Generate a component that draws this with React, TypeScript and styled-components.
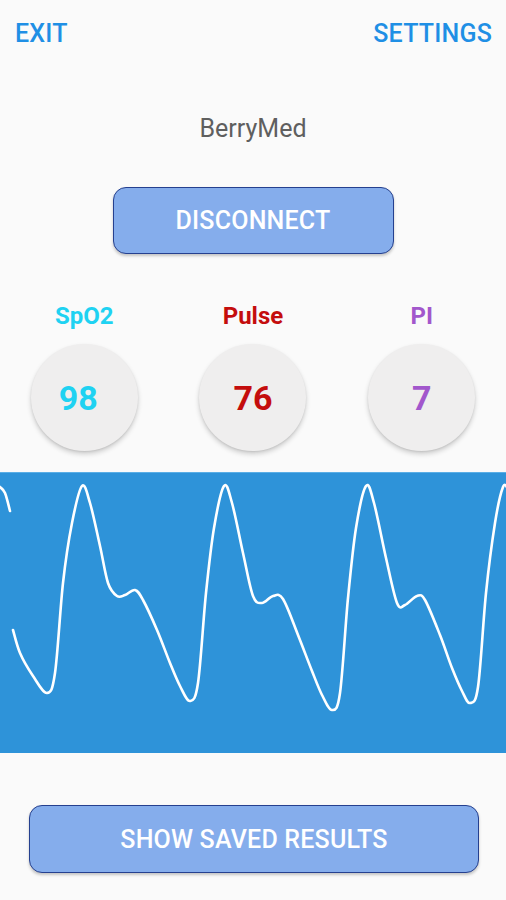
import styled, { createGlobalStyle } from "styled-components";

const GlobalStyle = createGlobalStyle`
    html, body {
        margin: 0;
        padding: 0;
        background: #fafafa;
    }
    body {
        font-family: Roboto, "Noto Sans", sans-serif;
    }
`

const Page = styled.div`
    width: 506px;
    height: 900px;
    overflow: hidden;
    display: flex;
    flex-direction: column;
    background: #fafafa;
`

const TopBar = styled.div`
    display: flex;
    justify-content: space-between;
    padding: 22px 14px 0 15px;
`

const TopLink = styled.span`
    color: #1f8fe5;
    font-size: 25px;
    line-height: 24px;
    font-weight: 500;
    letter-spacing: 0.2px;
`

const DeviceName = styled.div`
    margin-top: 71px;
    text-align: center;
    color: #5f5f5f;
    font-size: 25px;
    line-height: 24px;
`

const ActionButton = styled.button<{ w: number; h: number; top: number; left?: number }>`
    display: flex;
    align-items: center;
    justify-content: center;
    box-sizing: border-box;
    width: ${p => p.w}px;
    height: ${p => p.h}px;
    margin: ${p => p.top}px 0 0 ${p => (p.left === undefined ? "auto" : `${p.left}px`)};
    ${p => (p.left === undefined ? "margin-right: auto;" : "")}
    padding: 0;
    background: #85adec;
    border: 1.5px solid #25408f;
    border-radius: 13px;
    box-shadow: 0 2px 3px rgba(0, 0, 0, 0.22);
    color: #ffffff;
    font-family: Roboto, sans-serif;
    font-size: 25px;
    font-weight: 500;
    letter-spacing: 0.2px;
`

const Readings = styled.div`
    display: grid;
    grid-template-columns: repeat(3, 1fr);
    margin-top: 51px;
`

const Reading = styled.div`
    display: flex;
    flex-direction: column;
    align-items: center;
`

const ReadingLabel = styled.div<{ color: string }>`
    color: ${p => p.color};
    font-size: 24px;
    line-height: 23px;
    font-weight: 700;
`

const ReadingCircle = styled.div<{ color: string; nudge: number }>`
    margin-top: 16px;
    width: 107px;
    height: 107px;
    box-sizing: border-box;
    padding-right: ${p => p.nudge}px;
    border-radius: 50%;
    background: #efeeee;
    box-shadow: 0 3px 5px rgba(0, 0, 0, 0.18), 0 1px 2px rgba(0, 0, 0, 0.08);
    display: flex;
    align-items: center;
    justify-content: center;
    color: ${p => p.color};
    font-size: 34px;
    font-weight: 700;
`

const WavePanel = styled.div`
    margin-top: 21px;
    height: 281px;
    background: #2e93d9;
    border-top: 1px solid #5aaee6;
    box-sizing: border-box;
`

const WaveSvg = styled.svg`
    display: block;
    width: 506px;
    height: 280px;
`

// pleth samples, page coords (y is shifted by the panel top below)
const PANEL_TOP = 471

const tail = [[0, 484], [5, 490], [10, 508]]

const wave = [
    [13, 627], [20, 650], [33, 673], [47, 690],
    [55, 670], [63, 580], [72, 520], [82, 483], [90, 500], [100, 543], [108, 580], [117, 593], [125, 592], [135, 587], [143, 597], [157, 627], [170, 660], [180, 683], [190, 698],
    [198, 680], [206, 590], [214, 525], [224, 483], [232, 500], [243, 550], [253, 593], [262, 600], [273, 593], [283, 596], [298, 632], [312, 668], [322, 692], [332, 707],
    [340, 690], [348, 595], [356, 525], [366, 483], [374, 500], [386, 555], [397, 600], [405, 602], [417, 593], [425, 597], [440, 632], [452, 665], [462, 688], [470, 700],
    [478, 684], [486, 590], [495, 520], [503, 484], [508, 486],
]

function smoothPath(pts: number[][]): string {
    const p = pts.map(([x, y]) => [x, y - PANEL_TOP])
    let d = `M${p[0][0]},${p[0][1]}`
    for (let i = 0; i < p.length - 1; i++) {
        const p0 = p[i - 1] || p[i]
        const p1 = p[i]
        const p2 = p[i + 1]
        const p3 = p[i + 2] || p2
        const c1x = p1[0] + (p2[0] - p0[0]) / 6
        const c1y = p1[1] + (p2[1] - p0[1]) / 6
        const c2x = p2[0] - (p3[0] - p1[0]) / 6
        const c2y = p2[1] - (p3[1] - p1[1]) / 6
        d += ` C${c1x.toFixed(1)},${c1y.toFixed(1)} ${c2x.toFixed(1)},${c2y.toFixed(1)} ${p2[0]},${p2[1]}`
    }
    return d
}

const readings = [
    { label: "SpO2", value: "98", color: "#1fd2f2", nudge: 12 },
    { label: "Pulse", value: "76", color: "#c40d0d", nudge: 0 },
    { label: "PI", value: "7", color: "#a257cc", nudge: 0 },
]

export default function App() {
    return (
        <Page>
            <GlobalStyle />
            <TopBar>
                <TopLink>EXIT</TopLink>
                <TopLink>SETTINGS</TopLink>
            </TopBar>
            <DeviceName>BerryMed</DeviceName>
            <ActionButton w={281} h={67} top={46}>DISCONNECT</ActionButton>
            <Readings>
                {readings.map(r => (
                    <Reading key={r.label}>
                        <ReadingLabel color={r.color}>{r.label}</ReadingLabel>
                        <ReadingCircle color={r.color} nudge={r.nudge}>{r.value}</ReadingCircle>
                    </Reading>
                ))}
            </Readings>
            <WavePanel>
                <WaveSvg viewBox="0 -1 506 280">
                    <path d={smoothPath(tail)} fill="none" stroke="#ffffff" strokeWidth={2.6} strokeLinecap="round" />
                    <path d={smoothPath(wave)} fill="none" stroke="#ffffff" strokeWidth={2.6} strokeLinejoin="round" strokeLinecap="round" />
                </WaveSvg>
            </WavePanel>
            <ActionButton w={450} h={68} top={52} left={29}>SHOW SAVED RESULTS</ActionButton>
        </Page>
    )
}
